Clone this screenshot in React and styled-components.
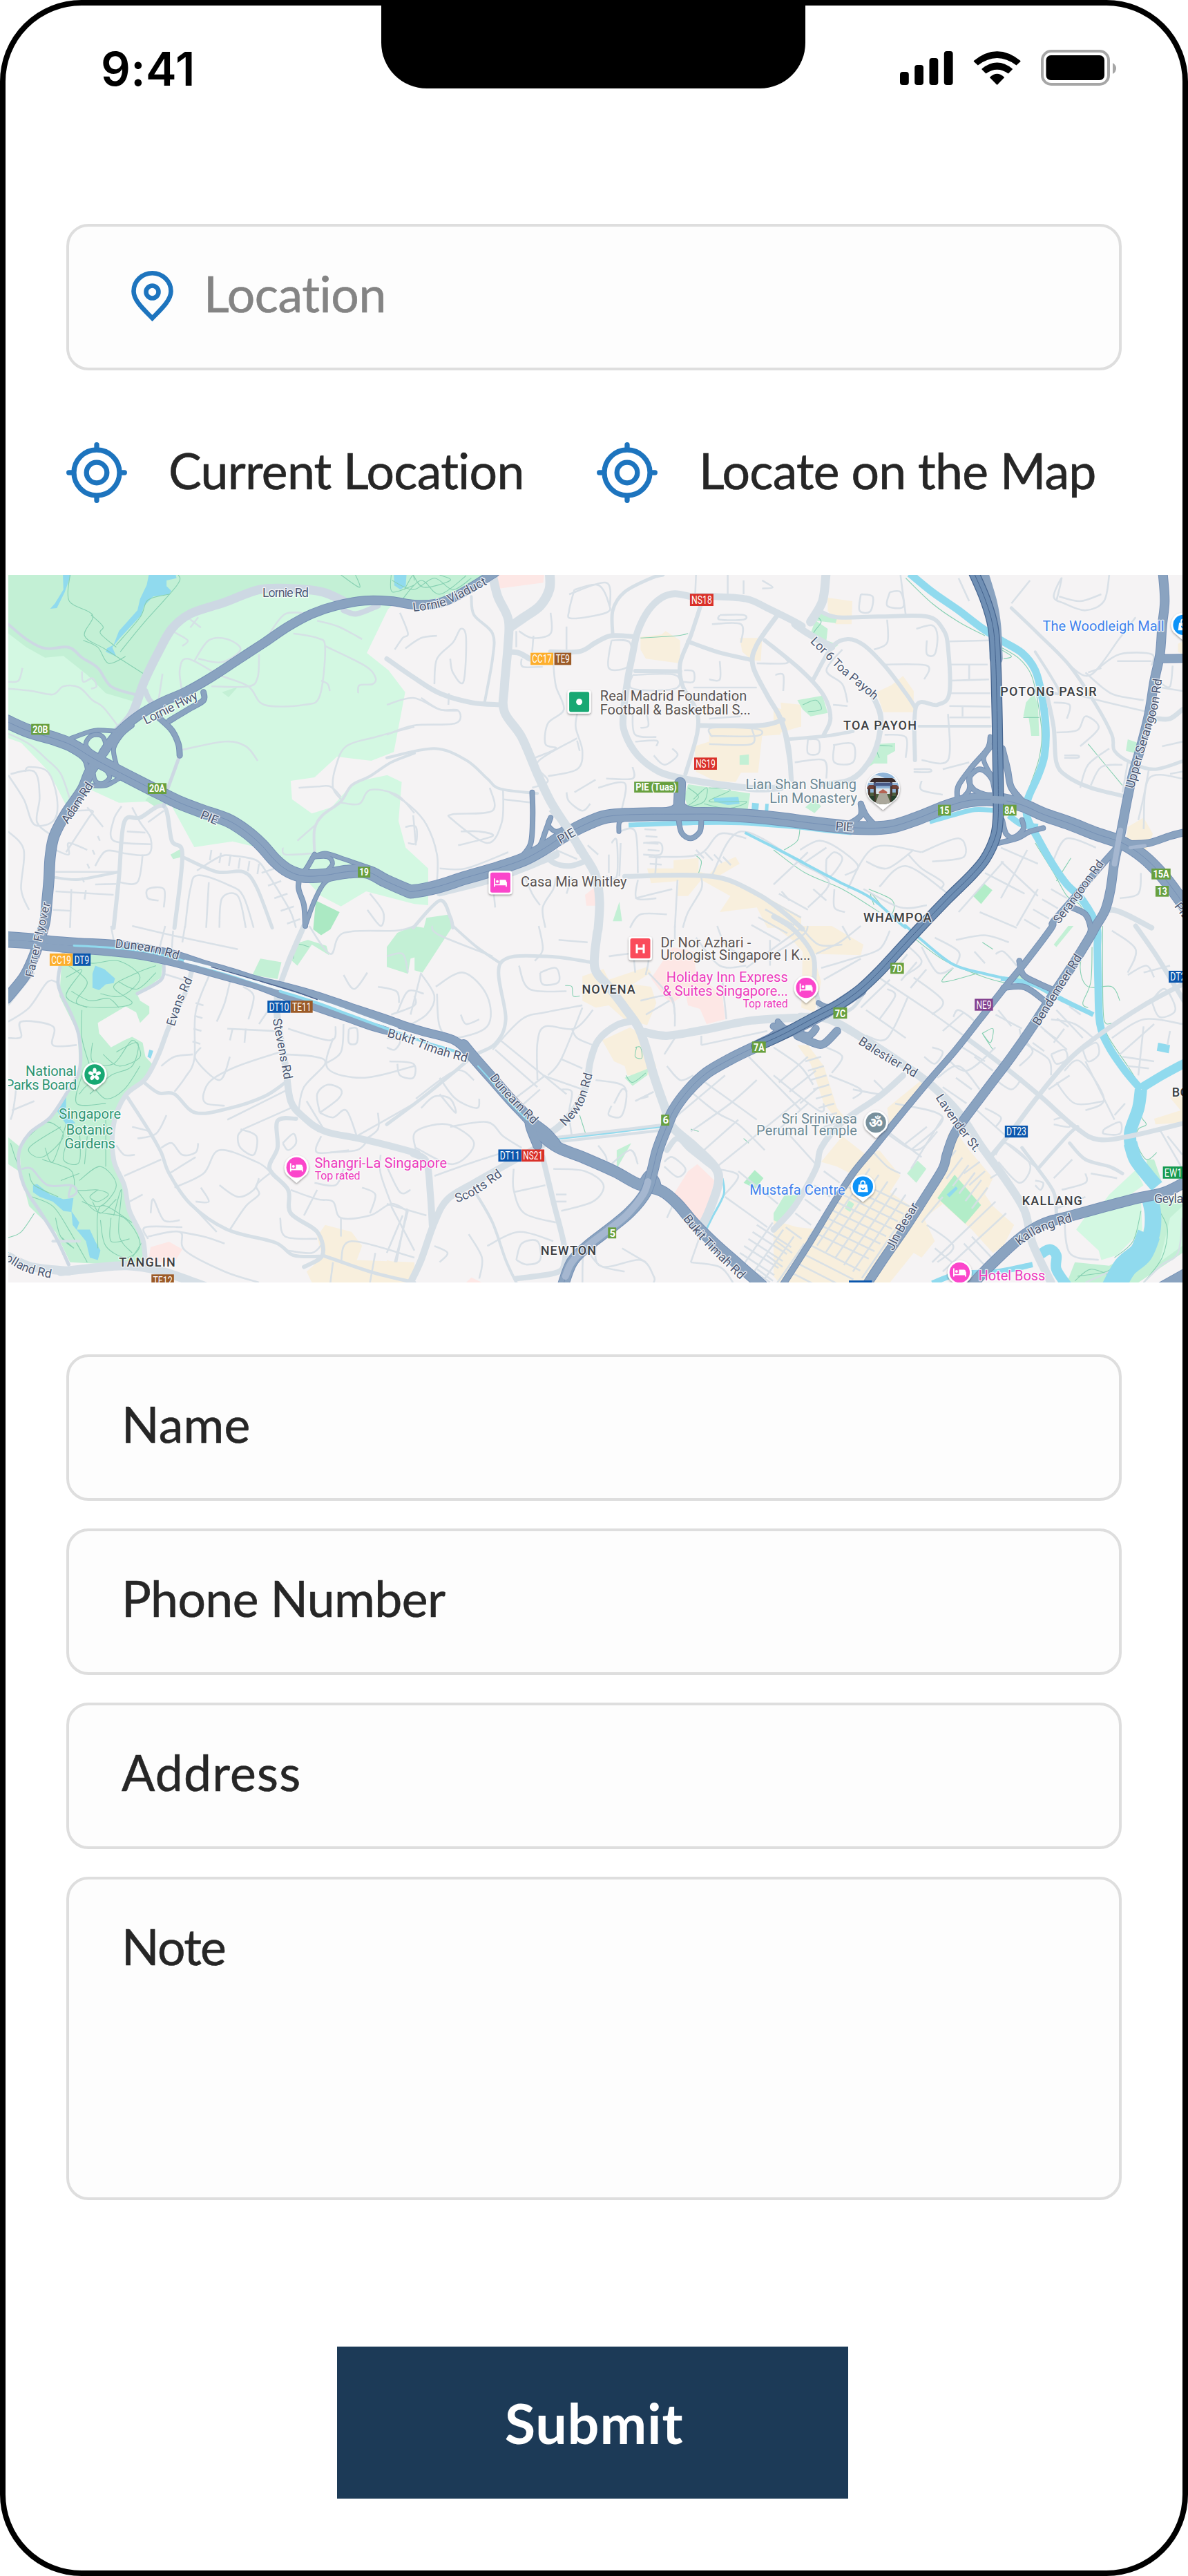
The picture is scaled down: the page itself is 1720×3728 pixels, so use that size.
import React from "react";
import styled, { createGlobalStyle } from "styled-components";

const GlobalStyle = createGlobalStyle`
  * { box-sizing: border-box; }
  body { margin: 0; background: #fff; }
`;

const Phone = styled.main`
  position: relative;
  display: flex;
  flex-direction: column;
  width: 1720px;
  height: 3728px;
  border: 8px solid #000;
  border-radius: 118px;
  background: #fff;
  overflow: hidden;
  font-family: Lato, "Open Sans", sans-serif;
`;

const Notch = styled.div`
  position: absolute;
  top: -1px;
  left: 544px;
  width: 614px;
  height: 121px;
  border-radius: 0 0 66px 66px;
  background: #000;
`;

const StatusBar = styled.header`
  display: flex;
  justify-content: space-between;
  height: 316px;
  padding: 52px 96px 0 138px;
`;

const Clock = styled.time`
  font: 600 67px/80px Inter, sans-serif;
  letter-spacing: 0.4px;
  color: #000;
`;

const StatusIcons = styled.svg`
  display: block;
  width: 314px;
  height: 56px;
  margin-top: 10px;
`;

const Field = styled.div`
  display: flex;
  align-items: flex-start;
  height: ${(p) => (p.$tall ? 468 : 212)}px;
  padding: ${(p) => (p.$icon ? "64px 0 0 90px" : "54px 0 0 76px")};
  border: 4px solid #dedede;
  border-radius: 32px;
  background: #fdfdfd;
`;

const Label = styled.span`
  margin-top: ${(p) => p.$lift || 0}px;
  font-size: 71.5px;
  line-height: 84px;
  letter-spacing: ${(p) => p.$track || 0}px;
  white-space: nowrap;
  color: ${(p) => (p.$muted ? "#848484" : "#262626")};
  -webkit-text-stroke: 0.6px currentColor;
`;

const PinIcon = styled.svg`
  width: 61px;
  height: 73px;
  margin-right: 44px;
`;

const Search = styled.section`
  padding: 0 88px;
`;

const Choices = styled.section`
  display: flex;
  height: 88px;
  margin: 104px 88px 0;
`;

const Choice = styled.div`
  display: flex;
  align-items: center;
  gap: 60px;
  width: ${(p) => p.$width}px;
`;

const TargetIcon = styled.svg`
  flex: none;
  width: 88px;
  height: 88px;
`;

const MapFrame = styled.section`
  flex: none;
  height: 1024px;
  margin: 104px 0 0 4px;
  width: 1700px;

  svg {
    display: block;
    font-family: Roboto, sans-serif;
  }
`;

const Form = styled.form`
  display: flex;
  flex-direction: column;
  gap: 40px;
  margin: 104px 88px 0;
`;

const Submit = styled.button`
  align-self: flex-start;
  width: 740px;
  height: 220px;
  margin: 212px 0 0 480px;
  padding: 0 0 0 4px;
  border: 0;
  background: #1c3a57;
  color: #fff;
  font: 700 81px/96px Lato, sans-serif;
  letter-spacing: 0.8px;
`;

/* Map geometry. Points are grouped in six sheets; a letter selects the sheet. */
const KX = 600 / 1568;
const SHEETS = {
  A: [0, 820, KX, 1 / 3],
  B: [560, 820, KX, 1 / 3],
  C: [1120, 820, KX, 1 / 3],
  D: [0, 1340, KX, 530 / 1568],
  E: [560, 1340, KX, 530 / 1568],
  F: [1120, 1340, KX, 530 / 1568],
};

const points = (text) => {
  let sheet = SHEETS.A;
  let x = null;
  const out = [];
  text.trim().split(/\s+/).forEach((t) => {
    if (SHEETS[t]) sheet = SHEETS[t];
    else if (x === null) x = Number(t);
    else {
      out.push([sheet[0] + x * sheet[2], sheet[1] + Number(t) * sheet[3]]);
      x = null;
    }
  });
  return out;
};

const f = (n) => n.toFixed(1);

const curve = (text) => {
  const p = points(text);
  let d = `M${f(p[0][0])} ${f(p[0][1])}`;
  for (let i = 0; i < p.length - 1; i++) {
    const a = p[i - 1] || p[i];
    const b = p[i];
    const c = p[i + 1];
    const e = p[i + 2] || c;
    d += `C${f(b[0] + (c[0] - a[0]) / 6)} ${f(b[1] + (c[1] - a[1]) / 6)} ${f(c[0] - (e[0] - b[0]) / 6)} ${f(c[1] - (e[1] - b[1]) / 6)} ${f(c[0])} ${f(c[1])}`;
  }
  return d;
};

const poly = (text) => "M" + points(text).map((p) => `${f(p[0])} ${f(p[1])}`).join("L") + "Z";
const line = (text) => "M" + points(text).map((p) => `${f(p[0])} ${f(p[1])}`).join("L");

const C = {
  land: "#f5f3f4",
  park: "#c3f0d5",
  lawn: "#d3f8e2",
  water: "#90daee",
  tan: "#f8efdd",
  pink: "#fde7e5",
  street: "#d6dfe6",
  parkRoad: "#cdd8e3",
  path: "#86d0b2",
  hwy: "#8aa3c0",
  hwyEdge: "#7590b5",
  cte: "#6f8fb4",
  cteEdge: "#46658f",
};

const AREAS = [
  [C.lawn, "A 31 36 1480 36 1568 80 1468 185 1388 375 1470 450 1533 545 1490 805 1405 843 1275 825 1190 915 1100 930 1105 1010 1180 1072 1255 1045 1340 935 1465 905 1520 935 1508 1105 1535 1220 1620 1310 1620 1470 1568 1465 1385 1410 1290 1475 1215 1430 1150 1350 1060 1310 960 1215 880 1193 735 1218 650 1040 560 1020 450 1025 345 970 260 1060 185 890 80 765 31 745"],
  [C.park, "A 31 36 1568 36 1568 120 1300 150 1220 110 1090 90 980 100 720 200 640 290 560 480 520 590 400 550 330 470 240 388 170 395 100 350 31 290"],
  [C.park, "B 0 36 415 36 320 100 210 135 120 150 0 140"],
  [C.park, "A 840 545 900 522 865 567"],
  [C.park, "A 560 1000 600 990 630 1040 590 1045 550 1015"],
  [C.park, "A 645 1250 685 1225 690 1260 655 1270"],
  ["#abe9c3", "A 1195 1450 1285 1500 1250 1575 D 1215 40 1185 15"],
  [C.park, "D 1165 60 1235 85 1245 125 1180 80 1125 170 1095 140 1120 75"],
  [C.park, "D 985 140 1065 155 1050 228 955 210"],
  [C.park, "B 140 1568 150 1525 240 1510 250 1568 E 250 0 135 200 105 190 105 135 90 140 80 205 0 175 0 90 40 30 100 0"],
  [C.park, "D 235 125 380 120 520 140 615 165 610 220 520 295 530 320 565 345 565 375 530 415 515 370 475 345 370 415 375 460 420 520 470 490 500 475 540 500 550 560 575 590 545 660 470 725 430 860 430 1010 470 1110 490 1230 545 1350 550 1440 400 1448 265 1440 210 1310 110 1200 80 1070 75 970 110 885 190 815 250 720 300 610 295 460 225 300"],
  [C.park, "D 31 905 75 945 65 1000 85 1060 31 1020"],
  [C.water, "A 238 36 268 36 245 110 215 180 190 183 208 160 240 100"],
  [C.water, "A 563 36 665 36 668 50 630 60 630 85 648 105 640 120 580 130 545 170 535 210 450 315 425 350 440 390 400 370 405 355 430 340 450 280 520 190 530 140 555 80"],
  [C.water, "A 1490 36 1538 36 1535 85 1515 100 1492 82"],
  [C.water, "D 350 205 360 170 395 185 435 225 430 245 400 250 375 275 350 265"],
  [C.water, "D 215 790 250 730 250 800 285 845 250 850"],
  [C.water, "D 125 1110 140 1105 190 1150 240 1170 278 1165 270 1225 240 1220 200 1180 150 1160 125 1140"],
  [C.water, "D 270 1220 300 1270 290 1300 340 1300 360 1350 380 1390 370 1430 340 1420 325 1350 275 1280"],
  [C.pink, "B 413 36 595 36 592 70 425 95 415 60"],
  [C.pink, "B 750 1425 790 1390 792 1472 755 1472"],
  [C.pink, "D 570 1375 640 1352 690 1385 660 1440 560 1440"],
  [C.pink, "E 1000 225 1080 90 1160 110 1170 200 1270 300 1280 400 1210 420 1185 355 1140 340 1130 290 1080 330 1055 310"],
  [C.pink, "E 1140 1050 1175 1020 1240 1090 1200 1260 1160 1265 1085 1150"],
  [C.pink, "E 300 1527 320 1505 360 1527"],
  [C.tan, "B 960 305 1040 295 1055 280 1110 320 1110 420 980 400 960 360"],
  [C.tan, "B 1335 310 1420 310 1415 410 1380 405 1345 370"],
  [C.tan, "B 1220 705 1490 680 1490 730 1420 735 1405 895 1340 895 1320 935 1240 930 1170 890 1165 780 1220 760"],
  [C.tan, "B 1490 590 1568 600 1568 695 1500 700"],
  [C.tan, "C 205 135 298 150 295 250 235 250 205 190"],
  [C.tan, "C 390 545 445 515 490 475 530 540 530 632 415 632"],
  [C.tan, "C 0 610 100 640 100 695 0 730"],
  [C.tan, "B 1085 1275 1180 1265 1180 1325 1220 1335 1260 1290 1320 1260 1335 1290 1260 1340 1400 1410 1568 1520 1568 1568 1440 1568 1400 1480 1260 1500 1300 1430 1190 1360 1140 1430 1100 1430 1105 1365 1000 1375 985 1310 1085 1310"],
  [C.tan, "C 1340 1130 1400 1090 1435 1160 1410 1235 1335 1190"],
  [C.tan, "C 1530 335 1547 325 1547 380 1530 370"],
  [C.tan, "E 740 215 820 185 840 230 985 175 1000 200 930 250 1000 260 1020 330 985 425 940 410 900 400 840 340 790 350 740 320"],
  [C.tan, "E 815 490 920 435 960 460 1020 600 1010 640 910 640 900 600 860 580"],
  [C.tan, "D 1230 1280 1330 1310 1370 1370 1350 1430 1568 1440 1568 1527 1180 1527 1160 1480 1220 1420 1200 1330"],
  [C.tan, "E 0 1430 100 1465 85 1527 30 1527"],
  [C.tan, "F 0 0 220 0 340 80 330 125 150 120 180 240 155 370 105 350 110 110 70 60"],
  [C.tan, "F 90 510 130 510 190 600 240 780 290 850 240 830 190 760 140 590"],
  [C.tan, "F 180 1010 260 900 350 980 400 960 480 1070 440 1140 560 1230 610 1350 560 1420 530 1400 440 1527 20 1527 0 1500 0 1260 90 1290 180 1300 290 1060 240 1030"],
  [C.tan, "F 430 780 560 660 580 690 440 860"],
  [C.tan, "F 660 890 690 880 740 960 830 1080 800 1150 830 1200 910 1280 870 1370 830 1400 750 1300 640 1190 560 1260 560 1200 650 1050"],
  [C.tan, "F 1500 735 1568 700 1568 840 1445 850 1440 825 1540 790"],
  [C.park, "B 1140 945 1375 985 1365 1060 1140 1045 1125 1000"],
  [C.park, "B 855 1540 880 1455 890 1540"],
  [C.park, "B 1335 820 1370 815 1370 860 1335 860"],
  [C.park, "C 170 195 240 225 235 245 160 235 205 270 200 320 245 340 215 365 140 290"],
  [C.park, "C 90 580 185 560 205 635 140 650 110 620"],
  [C.park, "C 390 770 460 765 460 800 430 820 430 855 380 855 345 880 380 820"],
  [C.park, "C 120 1045 155 1010 180 1040 155 1070"],
  [C.park, "C 955 590 985 550 1000 600 1005 735 975 735 965 655 945 650"],
  [C.park, "C 1340 750 1378 765 1370 810 1333 800"],
  ["#b2edc8", "C 755 1430 795 1375 828 1405 785 1465"],
  ["#b2edc8", "F 685 1065 785 1195 725 1275 620 1165"],
  [C.park, "F 505 1060 545 1005 578 1040 540 1100"],
  [C.park, "F 0 1230 40 1155 100 1150 20 1270 0 1260"],
  [C.park, "F 270 1210 285 1175 305 1190 290 1225"],
  ["#b2edc8", "E 1350 1100 1392 1045 1425 1080 1395 1125"],
  [C.park, "E 900 650 990 610 985 640 930 685"],
  [C.park, "E 870 960 925 930 870 1040"],
  [C.park, "F 1060 80 1115 0 1135 0 1070 90"],
  [C.park, "F 920 205 950 200 970 235 1050 275 1060 310 960 240 900 225"],
  [C.lawn, "F 1270 1150 1370 1045 1400 1110 1350 1150 1250 1180"],
  [C.lawn, "F 1180 1245 1390 1170 1395 1300 1300 1410 1240 1430 1230 1390 1145 1300"],
  [C.park, "F 1410 1000 1440 1000 1470 1100 1420 1060"],
  [C.park, "F 1440 1180 1547 1150 1547 1400 1380 1527 1110 1527 1140 1440 1270 1455 1390 1380 1400 1300"],
  [C.lawn, "F 1500 1250 1547 1200 1547 1370 1460 1440"],
  [C.water, "F 1455 500 1500 510 1495 545 1450 535"],
  [C.water, "F 655 1150 690 1115 697 1125 665 1162"],
  [C.water, "B 1235 1005 1330 1000 1335 1030 1290 1035 1240 1020"],
  [C.water, "B 1382 1025 1408 1028 1405 1065 1380 1060"],
  [C.water, "B 1432 1030 1445 1030 1443 1068 1430 1065"],
  [C.water, "D 565 530 580 535 570 568 558 560"],
];

const WATERWAYS = [
  [11, "C 515 30 600 110 700 190 780 260 860 320 940 375 990 450 1015 560 1030 700 1025 820 1000 910 962 1010 960 1090 1000 1180 1060 1300 1110 1380 1170 1450 1222 1560 F 1225 100 1228 250 1235 420 1270 520 1330 620 1390 700"],
  [18, "F 1390 700 1380 780 1350 880 1352 950"],
  [20, "F 1350 930 1370 1000 1410 1060 1450 1115"],
  [24, "F 1420 1150 1435 1230 1430 1320 1400 1380"],
  [34, "F 1420 1320 1390 1400 1330 1460 1280 1560"],
  [13, "F 1390 695 1470 640 1568 580"],
  [7, "B 915 1122 1150 1112 1340 1112 1568 1132 C 105 1132 200 1145 295 1155"],
  [7, "C 590 1108 680 1078 760 1055 830 1058"],
  [9, "C 890 1080 940 1120 1000 1130"],
  [4, "B 1355 1155 1450 1210 1568 1280 C 105 1282 250 1370 370 1440 490 1560 F 500 0 560 60 680 165 800 205 900 230"],
  [7, "F 860 225 980 250 1100 320 1210 380"],
  [3, "E 640 912 800 892 1040 860 1080 870"],
  [3, "E 1270 1080 1275 1150 1230 1250 1200 1320"],
  [15, "F 1010 1405 1045 1385 1070 1410 1070 1470 1110 1540"],
  [8, "F 600 1530 700 1490 850 1480 980 1450"],
];

const ARTERIALS = [
  [13, "B 400 36 420 130 460 230 458 350 445 520 445 630 510 740 570 900 620 1020 680 1130 740 1240 790 1340 805 1450 800 1568 E 795 40 787 180 840 260 900 350 950 430 980 520 1010 640 1050 770 1080 860 1160 940 1240 1030 1255 1100 1220 1220 1190 1290"],
  [14, "B 617 36 615 100 580 170 520 220 470 260"],
  [10, "B 1150 130 1090 118 1040 135 990 190 950 280 930 380 910 500 895 640 900 720 950 820 1030 890 1120 920 1250 945 1400 965 1490 960"],
  [10, "B 1150 130 1240 130 1360 140 1440 180 1568 255 C 80 250 130 290 220 350"],
  [8, "B 460 370 500 375 540 400"],
  [7, "B 620 370 730 368 790 330 850 300 940 305"],
  [6, "B 1190 160 1150 300 1110 420 1120 520 1170 620 1175 720 1130 900"],
  [6, "B 1140 325 1250 370 1380 405"],
  [7, "B 1475 215 1400 340 1385 430 1440 560 1490 660 1520 780 1530 920"],
  [6, "B 1430 320 1568 450 C 190 560 215 660 190 730"],
  [7, "B 1180 690 1410 690 1500 665"],
  [6, "B 940 453 1110 455"],
  [5, "B 1045 36 1000 50 900 110 855 190 855 300"],
  [7, "B 900 1345 1230 1345 1400 1420 1500 1500 1568 1568 F 105 10"],
  [8, "B 750 1280 690 1300 630 1285 600 1250"],
  [11, "B 200 1415 420 1350 590 1275 640 1250"],
  [4, "A 1568 810 1480 850 1400 910 1330 950 1290 1020 1220 1080 1190 1140 1190 1240"],
  [13, "C 198 36 185 150 140 240"],
  [6, "C 170 190 240 220 400 217 580 217 640 270 660 350 665 550 620 600 540 605 535 840"],
  [5, "C 50 750 200 735 300 715"],
  [6, "C 150 490 220 350 280 315 340 340 420 430 500 550 535 610"],
  [8, "C 370 550 405 650 390 780 340 880 280 930 180 945"],
  [5, "C 0 600 40 720 70 930"],
  [4, "C 550 693 820 693"],
  [5, "C 900 180 1000 290 1120 430 1220 600 1280 730 1290 800 1350 850 1440 880 1547 845"],
  [6, "C 1035 560 1060 700 1070 850 1110 910 1200 960 1320 995"],
  [4, "C 1040 540 1080 540 990 370"],
  [7, "C 1450 660 1500 660 1547 620"],
  [8, "C 1210 1560 1280 1490 1430 1568"],
  [12, "E 975 455 1060 470 1200 445 1380 405 1568 392 F 105 390 210 400 330 475 480 585 600 685 700 800 790 950 880 1090 950 1220 980 1360 1050 1527"],
  [10, "E 940 405 870 425 800 490 770 580 755 680 720 770 660 850 600 900"],
  [10, "E 600 930 480 1005 330 1100 230 1170 180 1270 130 1430 90 1527"],
  [8, "E 590 990 630 1180 670 1360 672 1440 640 1485 490 1510"],
  [4, "E 640 905 800 885 1040 852"],
  [4, "E 640 925 800 905 1040 875"],
  [8, "E 1060 960 1100 910 1150 960 1240 1040"],
  [13, "D 230 1480 350 1465 480 1455 600 1475 720 1520 780 1545"],
  [13, "D 31 1415 120 1460 260 1478"],
  [10, "D 1050 290 1050 400 1080 600 1100 750 1150 820 1230 880 1380 915 1568 970 E 100 975 150 1010 165 1150 172 1280"],
  [8, "D 1150 0 1100 130 1060 250"],
  [7, "D 725 195 700 290 640 430 600 550 550 655 475 725 430 850 430 1000 470 1110 490 1220 540 1340 550 1450"],
  [5, "D 545 670 600 715 660 720 740 800 870 780 1000 730 1080 670"],
  [5, "D 480 730 560 870 610 970 640 1060 720 1190 860 1300 1040 1355 1110 1410 1210 1415"],
  [6, "D 1120 825 1050 835 1050 950 1020 1040 1090 1130 1100 1230 1200 1310 1220 1410 1150 1460"],
  [5, "D 1220 1410 1400 1480 1568 1527"],
  [7, "F 820 990 900 880 1000 730 1120 570 1240 460 1400 340 1547 250"],
  [7, "F 730 480 870 600 1010 730 1140 860 1230 915 1370 895 1568 840"],
  [9, "F 490 640 400 730 260 840 180 950 160 1040 80 1200 0 1300"],
  [7, "F 1370 0 1450 130 1520 260 1568 350"],
  [7, "F 0 -40 80 20 150 130 155 250 180 370"],
  [5, "F 200 400 300 350 360 250"],
  [4, "D 200 1350 300 1350"],
  [4, "A 210 1350 300 1358 450 1325"],
  [6, "A 430 1568 450 1350 470 1110 530 1090 620 1040 650 1190 690 1250 660 1568"],
  [5, "A 690 1260 820 1325 920 1325 970 1390 1030 1568"],
  [5, "E 0 850 130 740 250 630 330 555 410 505 450 400 430 160 600 130 770 155"],
  [4, "E 250 0 340 90 430 160"],
  [4, "E 340 1150 400 1270 450 1430 490 1527"],
  [7, "B 0 400 100 480 200 550 320 590 430 600"],
  [4, "B 320 130 330 210 400 290 400 400 370 590"],
  [4, "B 0 830 180 790 300 840 380 920 430 965 570 985"],
  [5, "B 100 1568 200 1450 240 1520 250 1568"],
  [5, "F 1000 1040 1110 900 1150 860"],
  [5, "F 1120 930 1180 1000 1270 1030 1320 1060"],
  [5, "F 940 950 1000 1040 1060 1140 1070 1230"],
];

const HIGHWAYS = [
  [13, "A 390 810 440 730 520 650 610 590 700 545 800 480 900 405 1000 330 1090 260 1180 205 1270 170 1380 148 1480 150 1568 165 B 190 160 250 135 320 90 410 25"],
  [8, "A 770 545 770 580 720 615 640 670"],
  [8, "A 600 655 650 710 675 770 680 820"],
  [15, "A 380 830 340 890 310 970 250 1070 205 1170 190 1260 185 1360 178 1450 170 1540 D 150 60 125 140 90 220 25 310"],
  [6, "A 270 745 330 720 370 710 440 715"],
  [6, "A 440 860 430 790 460 730 500 690"],
  [6, "A 360 820 325 775 345 735 385 735 400 780 380 830"],
  [6, "A 350 870 360 930 390 940 415 915 400 880"],
  [6, "A 350 950 400 950 450 920 480 900"],
  [6, "A 260 790 320 840 335 920"],
  [7, "A 1190 1250 1160 1310 1135 1350 1130 1400 1150 1470 1155 1560"],
  [6, "A 1190 1260 1230 1245 1290 1265 1390 1305"],
  [6, "A 1190 1260 1240 1260 1258 1290 1230 1330"],
  [6, "A 1155 1560 1190 1450 1230 1370 1290 1340"],
  [7, "B 550 980 552 1080 545 1200 510 1260"],
  [7, "B 620 1090 600 1150 580 1210 540 1250"],
  [6, "B 620 1090 610 1120 640 1150 680 1130"],
  [16, "B 1110 940 1105 1060"],
  [7, "B 1105 1020 1080 1050 1010 1065"],
  [7, "B 1105 1020 1140 1050 1220 1065"],
  [7, "B 1103 1090 1115 1155 1150 1180 1185 1150 1190 1095"],
  [6, "B 878 1150 880 1110 900 1095"],
  [8, "C 330 1030 330 1080 290 1115"],
  [8, "C 330 1030 350 1080 380 1120"],
  [7, "C 820 740 810 790 750 870 700 950 695 1000"],
  [7, "C 740 900 740 970 700 1020"],
  [7, "C 840 1000 825 920 780 880 740 920 760 970 830 1000"],
  [6, "C 825 780 795 830 810 880 840 930"],
  [9, "C 865 790 885 880 900 960 950 1030"],
  [7, "C 850 1200 920 1180 970 1150 1020 1135"],
  [7, "C 865 1100 880 1160 910 1175 945 1140 940 1100"],
  [19, "A 25 672 110 715 200 745 270 775 350 830 430 880 540 945 600 980 680 1025 760 1060 860 1100 930 1150 990 1210 1040 1275 1090 1320 1150 1343 1230 1340 1310 1325 1390 1325 1460 1365 1540 1405 B 100 1410 190 1390 300 1350 420 1310 520 1270 600 1220 660 1175 740 1125 820 1088 900 1078 1000 1075 1100 1075 1250 1075 1400 1085 1520 1100 C 105 1108 230 1125 330 1135 440 1130 540 1095 650 1045 740 1015 850 1012 940 1035 1020 1075 1120 1115 1220 1160 1320 1200 1400 1260 1470 1340 1530 1430 1590 1530"],
  [13, "C 1473 30 1480 150 1470 260 1462 380 1440 500 1420 640 1390 780 1360 900 1340 1000 1315 1150 1290 1280 1275 1400 1255 1490 1220 1560 F 1190 60 1130 170 1060 290 980 430 900 560 820 680 720 830 680 900 655 980 640 1040 580 1150 500 1290 420 1420 350 1540"],
  [9, "C 1300 1220 1230 1310 1150 1420 1060 1540 F 1050 10 950 160 870 270 780 400 690 530 590 660 480 810 380 950 300 1060 220 1200 140 1350 30 1545"],
  [8, "C 1130 1480 1180 1510 1200 1568 F 1195 40"],
  [10, "C 1335 1205 1420 1200 1500 1170 1568 1150"],
  [12, "C 1460 400 1568 398"],
  [8, "F 930 150 945 210 1000 245 1070 280"],
  [8, "F 870 265 950 262 1025 320"],
  [15, "F 1568 1090 1480 1140 1380 1165 1260 1200 1130 1240 1020 1275 940 1330 860 1410 780 1500 750 1540"],
  [16, "F 1450 1560 1568 1485"],
  [12, "D 25 42 120 50 200 62 300 70 430 78 540 95 650 120 760 160 880 200 980 235 1080 262 1200 300 1330 350 1450 395 E 60 425 140 453 250 487 310 540"],
  [11, "D 25 75 120 82 250 98 400 110 520 125 640 152 760 187 870 222 960 250 1050 288 1180 342 1300 388 1400 428 1470 450"],
  [16, "E 290 510 330 565 400 655 470 745 540 830 590 900 650 950 740 990 860 1050 950 1105 1040 1135 1100 1190 1160 1270 1240 1360 1330 1450 1420 1540"],
  [13, "E 570 940 540 840 600 880 640 930"],
  [9, "E 960 1110 990 1060 1020 1090 1030 1140"],
  [8, "E 1480 410 1475 450 1430 490"],
  [8, "E 1480 410 1510 440 1568 450"],
  [11, "F 90 470 150 500 190 505 240 450"],
  [7, "F 170 330 200 345 240 340"],
  [10, "F 0 430 60 450 130 470 160 440"],
];
const PIE = HIGHWAYS.find((h) => h[0] === 19)[1];

const CTE_SOUTH = "F 330 275 250 335 150 400 60 450 0 480 E 1390 520 1300 570 1210 630 1140 705 1085 790 1055 870 1025 960 1005 1050 980 1140 920 1225 840 1300 760 1370 700 1440 665 1545";
const CTE_NORTH = "C 757 25 800 140 830 260 840 400 845 600 848 800 850 950 850 1080 840 1170 800 1270 740 1350 660 1440 560 1560 F 490 85 400 195 330 270 250 335 150 395 60 450 0 483 E 1400 515";

const STREETS = [
  "A 31 500 70 495 85 440", "A 31 530 120 540 200 555 240 520 300 525 350 580 390 610 445 690",
  "A 310 455 315 500 350 485 365 520 345 530", "A 690 550 680 450 710 400 830 470 940 520 1000 600 1150 600 1210 560 1230 350 1200 310 1110 290",
  "A 735 410 790 320 860 315 910 360 840 415 750 400", "A 800 520 940 520 975 480 980 380", "A 1020 290 1080 205 1170 205",
  "A 1200 235 1280 260 1370 315", "A 1230 345 1380 430 1420 480 1410 510 1360 515 1355 550", "A 1215 495 1240 510 1248 540", "A 690 795 850 760 930 780 975 843",
  "A 1125 1190 1190 1125", "A 1070 1220 1080 1250 1180 1245", "A 1290 1025 1360 1030 1400 970 1500 990 1568 1070",
  "A 1568 695 1420 740 1310 780 1270 870 1260 960 1290 1010", "A 1130 960 1200 955 1250 955 1290 1000", "A 715 225 760 265", "A 720 265 750 220",
  "A 660 285 710 320 690 345", "A 600 580 615 465", "A 31 725 110 770 180 840 230 900 265 1010",
  "A 40 900 130 890 150 1000 140 1110 200 1170", "A 95 890 110 870 180 890 215 1000 205 1100 130 1120 90 1010 31 905",
  "A 31 1150 90 1230 80 1400 110 1490", "A 210 1230 260 1250 260 1200 330 1230", "A 250 1240 330 1100 350 1060 290 1060",
  "A 330 1045 390 1130", "A 460 1040 430 1100 430 1190 570 1205", "A 480 1150 550 1155", "A 500 1045 530 1110 570 1180 560 1250 470 1245",
  "A 360 1300 400 1235 470 1245", "A 210 1410 430 1425", "A 360 1380 440 1378", "A 270 1400 265 1568", "A 325 1405 320 1445", "A 200 1490 270 1495",
  "A 210 1325 450 1325", "A 450 1370 520 1370 540 1250", "A 560 1110 620 1060", "A 745 1320 830 1260 880 1255 970 1275 1010 1330 1060 1420 1100 1500 1120 1568",
  "A 700 1568 720 1400 750 1340 870 1385 920 1430 960 1568", "A 790 1370 780 1568", "A 830 1568 840 1440 900 1430 930 1568",
  "A 620 1480 620 1400 560 1400 560 1440 600 1450", "A 1400 1420 1450 1500 1440 1560 1390 1490",
  "B 0 600 100 570 200 620 270 625", "B 30 360 60 310 80 290 50 200", "B 180 510 190 400 250 330 280 270 300 310 290 500 250 460 240 400",
  "B 70 355 130 310 190 300", "B 130 570 200 620 270 625 260 680 100 690 0 730", "B 235 550 233 600", "B 500 280 550 310 620 290 620 200",
  "B 490 350 490 280", "B 550 370 555 300", "B 510 400 515 435 590 435", "B 630 420 640 520 670 620 610 680 600 770 640 790 560 830",
  "B 710 100 800 80 840 160 830 200 700 225 690 190 710 100", "B 690 120 830 70 845 170", "B 680 260 680 360", "B 850 320 920 330 915 430 840 440 850 320",
  "B 720 640 715 700 740 800 720 880 610 910", "B 550 960 610 930 570 850 720 745", "B 720 755 730 800", "B 440 965 435 1110 380 1200 250 1100 250 1075 400 1060 390 960",
  "B 440 1010 550 1025", "B 200 1310 300 1310 460 1240", "B 280 1150 350 1150 400 1170 270 1210", "B 10 980 90 1040 150 1120 190 1250 190 1370",
  "B 70 1130 110 1130 110 1200 80 1200", "B 100 1080 110 1210", "B 680 980 690 1020 740 1060 770 1030", "B 710 980 790 925", "B 830 920 930 920 930 870",
  "B 800 960 900 940 890 1050", "B 1170 36 1165 170", "B 1290 36 1290 120", "B 1420 60 1460 90 1420 95", "B 1350 60 1350 120",
  "B 1260 210 1350 210 1350 230 1260 230 1260 210", "B 1230 250 1340 250 1340 330", "B 1400 420 1510 420 1510 400", "B 1260 410 1260 490 1220 490",
  "B 1160 525 1400 525", "B 1190 560 1320 560 1320 590", "B 1220 660 1340 650", "B 1230 740 1230 700 1400 705 1400 735 1230 735", "B 1220 770 1380 770 1380 700",
  "B 930 470 1090 470 1090 530 930 530 930 470", "B 1125 450 1160 455 1160 500 1120 500", "B 930 640 940 730 1020 740", "B 940 760 1020 755 1020 780",
  "B 980 620 990 690 960 700", "B 1010 820 1050 860 1100 820 1080 790", "B 1470 470 1500 470 1500 540", "B 880 1150 940 1150 950 1330", "B 885 1200 880 1345",
  "B 840 1250 840 1330", "B 970 1200 1035 1200 1035 1250 970 1250", "B 1010 1260 1180 1250 1260 1160 1360 1180", "B 1020 1265 1015 1350",
  "B 1230 1340 1340 1150 1568 1290", "B 1100 1360 1090 1568", "B 940 1440 1080 1400", "B 950 1360 945 1440 1020 1440", "B 1190 1350 1190 1400 1140 1500 1120 1568",
  "B 920 1568 960 1510 1060 1510", "B 600 1568 590 1480 630 1400 640 1350", "B 520 1340 550 1420 580 1470", "B 680 1420 700 1350", "B 410 1480 405 1420",
  "B 850 1200 870 1190 870 1345 830 1345", "B 640 1230 720 1270", "B 760 1210 800 1250",
  "C 330 120 375 130 365 195 325 190 330 120", "C 440 110 480 110 490 175 430 170 440 110", "C 480 36 500 210", "C 540 270 600 255 620 300 610 380 580 380 580 320",
  "C 665 325 820 320", "C 670 425 810 425", "C 670 495 815 490", "C 670 550 820 550", "C 665 605 820 608", "C 665 655 820 655", "C 715 605 715 650", "C 740 425 740 490",
  "C 430 230 430 330 380 360", "C 420 425 580 430 570 490", "C 260 360 200 450 260 510 280 590", "C 225 600 280 605", "C 225 775 300 770 300 850 230 850 230 775",
  "C 130 750 170 755 170 810 130 810 130 750", "C 80 850 190 840 200 920", "C 660 640 660 840 560 840", "C 420 730 500 740 500 830", "C 530 880 590 880 590 892 530 892",
  "C 640 880 740 850", "C 560 930 560 970 640 990", "C 700 50 740 150", "C 900 160 970 60", "C 1070 150 1090 50 1060 130 1100 160 1180 190 1250 150 1270 36", "C 1080 130 1160 150 1240 120",
  "C 1120 430 1200 470 1310 310 1370 220", "C 1180 460 1250 530 1300 560 1400 580", "C 1190 460 1240 440", "C 1230 440 1310 380 1430 380 1430 430", "C 1300 410 1430 410",
  "C 1060 590 1120 600 1110 660", "C 1070 720 1150 710 1180 650 1230 700 1160 780", "C 1160 560 1300 600 1450 640", "C 1160 960 1190 860 1270 790", "C 1200 950 1240 870 1320 860",
  "C 1340 850 1320 980", "C 1420 880 1400 1000 1380 1100", "C 1500 900 1547 890", "C 1547 920 1420 920 1400 1140", "C 1060 1270 1110 1180 1220 1220", "C 1100 830 1150 830 1150 820 1100 820",
  "C 1440 520 1547 540", "C 1470 780 1547 760", "C 1510 430 1500 520 1470 510",
  "C 100 1230 170 1190 240 1220 320 1300 270 1340", "C 280 1400 380 1220 560 1240", "C 110 1290 200 1220", "C 200 1270 230 1240 260 1270 220 1340 200 1330 200 1270",
  "C 350 1280 430 1310 530 1230", "C 560 1240 700 1180 720 1260 600 1280", "C 400 1390 500 1300 660 1420", "C 340 1400 480 1480 580 1470", "C 510 1250 560 1310 640 1370 630 1400",
  "C 860 1280 1000 1430", "C 860 1220 1000 1290", "C 700 1500 870 1280", "C 960 1230 860 1440", "C 1000 1400 920 1560", "C 780 1500 920 1568", "C 800 1330 950 1420", "C 1310 1440 1380 1420 1390 1330",
  "C 230 1400 230 1480 270 1500", "C 150 1400 200 1450", "C 30 1410 60 1450", "C 0 1380 130 1240", "C 130 1480 210 1370 100 1290",
  "D 31 410 110 350 180 240 220 245", "D 31 340 130 200", "D 31 480 80 475 80 410 200 430 200 510 290 510", "D 31 690 60 680 50 790 40 830", "D 45 790 130 750",
  "D 620 205 720 240", "D 790 215 740 370 735 570 700 650 660 710", "D 600 110 625 0", "D 650 100 655 20", "D 430 60 420 0", "D 500 0 650 40 900 100", "D 700 0 690 70",
  "D 870 240 850 330 820 410", "D 920 260 960 300 940 400", "D 860 440 1040 450", "D 880 440 870 490", "D 930 440 925 500", "D 1040 320 980 420", "D 1090 440 1250 490 1270 430",
  "D 1060 540 900 600 800 660 770 720 780 760 850 770", "D 1080 550 1190 560 1230 590 1150 690 1130 790", "D 1230 590 1290 540 1300 420", "D 1260 480 1240 610 1380 650 1568 600",
  "D 610 600 660 560 730 550", "D 760 520 740 570 830 660 870 560", "D 860 830 1090 700", "D 920 870 1100 780", "D 910 870 970 900 960 980 910 950 900 900 920 870",
  "D 1070 930 1110 890 1120 930 1090 960 1070 930", "D 1210 800 1280 740 1290 700 1240 680 1200 720 1210 800", "D 1210 800 1260 820 1310 790 1350 900", "D 1160 750 1230 880",
  "D 1350 900 1568 760", "D 1380 915 1430 870 1430 800", "D 1250 970 1350 960 1390 920", "D 1215 900 1200 970 1320 960",
  "D 610 1000 470 1070", "D 610 950 650 930 690 980 740 970 750 930", "D 660 1120 770 1060 830 960 970 1010 1020 1050", "D 640 1060 740 990", "D 440 940 470 980 510 980",
  "D 500 860 570 880", "D 520 910 590 890 630 810", "D 720 1190 820 1310", "D 830 1110 900 1160 960 1130 980 1080", "D 760 1120 790 1180 740 1180", "D 870 1300 930 1200 980 1150 970 1110 1020 1060",
  "D 560 1330 680 1310 700 1390 850 1480 980 1527", "D 680 1310 770 1330 850 1360", "D 560 1340 550 1290 690 1290", "D 570 1230 580 1170 620 1260 680 1260", "D 490 1180 540 1150",
  "D 1100 1130 1200 1170 1260 1180 1290 1250 1400 1240 1480 1190 1540 1220", "D 1480 1190 1440 1060 1440 980", "D 1200 1130 1150 1240", "D 1190 1100 1270 1110 1300 1040",
  "D 1370 1120 1420 1150 1400 1230", "D 1290 1250 1290 1330", "D 1290 1440 1330 1350 1568 1420", "D 1500 1440 1540 1210", "D 1480 1200 1568 1390", "D 1250 1527 1260 1440", "D 1400 1527 1420 1400",
  "D 1060 1250 1080 1330 1200 1340", "D 1090 1390 1180 1400 1220 1360", "D 1170 0 1250 120 1300 30 1500 20 1568 0", "D 1430 260 1500 280 1510 330",
  "D 1300 210 1340 270 1390 200", "D 1370 370 1350 410", "D 1480 380 1568 340 1568 300", "D 1320 440 1320 500 1350 500 1350 440 1320 440",
  "E 0 130 60 120 80 200", "E 170 0 200 40 400 130", "E 130 205 180 300 150 380 60 440", "E 130 200 90 380", "E 185 260 290 200 380 300 380 430 250 480 200 430 190 290",
  "E 40 370 80 280 140 290", "E 280 380 300 420 350 400", "E 575 0 590 100 560 150", "E 650 60 760 70", "E 580 200 640 180 650 240 590 250 580 200", "E 500 170 540 270 680 280",
  "E 400 530 510 400 600 370 740 340", "E 570 660 570 500 600 430 710 440 780 360", "E 700 440 720 480 780 510", "E 740 350 660 570 610 640", "E 410 530 570 690", "E 430 490 680 720",
  "E 660 570 740 610", "E 590 640 740 700", "E 460 760 600 640", "E 500 780 580 700", "E 0 480 50 490 30 530 0 520", "E 10 580 100 590 100 650 50 640 40 590",
  "E 110 740 260 620 330 660", "E 130 780 180 730 240 740 260 800 200 720", "E 200 650 260 740 340 780 350 740", "E 110 960 110 880 230 850 330 930 250 1020 110 950",
  "E 240 860 380 840 440 900 510 950", "E 180 1070 330 1010 470 960", "E 790 660 900 690 890 810 840 810 850 770", "E 860 760 890 700 910 710", "E 660 700 700 710 690 800 700 900",
  "E 800 940 830 990 830 1040", "E 830 1040 920 960 950 1020", "E 630 1040 750 1050 820 1110 780 1180 660 1220", "E 480 1140 600 1110", "E 480 1040 480 1130 520 1230 640 1270",
  "E 640 1150 680 1150", "E 640 1180 680 1180", "E 0 1190 150 1240", "E 0 1030 50 1140 90 1130", "E 0 1400 60 1240", "E 30 1440 80 1220", "E 180 1370 230 1400 200 1440",
  "E 490 1430 510 1360 570 1350 580 1430 530 1450 490 1430", "E 310 1320 360 1420 350 1510", "E 380 1370 500 1310 630 1350", "E 740 1527 750 1390 820 1460 960 1430 1010 1500 1010 1527",
  "E 790 1370 800 1450 900 1480", "E 890 1380 980 1440", "E 1060 1250 1080 1200", "E 1150 1440 1260 1460 1310 1527", "E 1150 1440 1200 1280",
  "E 1140 700 1250 800 1330 850 1430 960", "E 1180 650 1400 830", "E 1370 560 1568 790", "E 1090 820 1280 640", "E 1150 880 1300 760 1400 660", "E 1250 1030 1568 740",
  "E 1200 960 1330 830", "E 1160 960 1220 1010", "E 1060 600 1110 660 1160 640", "E 1050 550 1090 480", "E 1190 510 1440 450", "E 1190 470 1190 510", "E 940 750 1010 710",
  "E 960 740 990 730", "E 1050 1010 1080 990 1130 1040 1100 1075 1050 1030", "E 1270 1160 1330 1070 1250 1040", "E 1280 1160 1440 1290", "E 1330 1050 1480 1190",
  "E 960 320 1070 300 1090 380", "E 980 380 1070 320", "E 1090 0 1090 60", "E 840 130 980 120 980 210", "E 930 80 940 200", "E 1170 50 1260 170 1360 170", "E 1250 0 1290 90 1400 150", "E 1270 240 1285 400",
  "E 990 200 1080 320 1090 430", "E 1360 180 1568 10", "E 1450 60 1450 170",
  "F 330 0 250 70 160 120", "F 440 20 400 100 300 140 180 180", "F 190 230 330 140", "F 290 300 380 200", "F 370 200 570 350 720 470", "F 440 230 330 350", "F 350 360 500 480",
  "F 510 300 430 480 350 470", "F 400 400 460 300 430 270", "F 600 380 640 320 530 220", "F 480 60 560 150 500 210", "F 560 90 620 200 680 180", "F 610 50 700 110 690 170",
  "F 690 60 800 40 890 70", "F 760 110 800 160", "F 840 120 870 110 920 170", "F 720 370 640 450", "F 680 390 700 360 760 410 740 440", "F 0 640 170 790 190 760", "F 0 520 100 600 150 680",
  "F 200 520 260 560 220 630", "F 60 710 160 620", "F 100 760 170 690", "F 20 670 130 560", "F 0 890 130 760", "F 40 870 160 1020", "F 210 640 330 700 300 740", "F 300 700 420 720 380 660",
  "F 430 890 540 960 620 880", "F 460 760 640 820 520 960", "F 420 870 560 990", "F 490 940 580 860", "F 520 1040 640 820", "F 370 960 430 1030 480 1060", "F 600 520 640 540 610 590 570 560",
  "F 650 560 730 620 840 520", "F 700 510 800 580", "F 620 650 700 600 780 700", "F 640 690 730 760", "F 690 650 750 700", "F 760 560 830 620", "F 830 650 900 700 940 650",
  "F 760 780 880 900", "F 800 780 860 820 840 860", "F 840 380 940 440", "F 850 360 900 430", "F 930 440 950 500 1040 570 1050 640", "F 950 490 980 540 930 600",
  "F 1050 400 1140 420 1220 490", "F 1070 360 1170 480", "F 1010 430 1110 530", "F 1060 500 1100 440", "F 1050 550 1100 530 1110 570 1070 590 1050 550",
  "F 1100 620 1160 580 1250 740 1180 790", "F 1170 530 1220 500 1230 550 1190 580 1170 530", "F 1070 670 1140 760 1250 750", "F 1040 700 1120 640", "F 1180 580 1290 830", "F 1290 810 1330 760",
  "F 1250 870 1310 840 1310 890 1250 890 1250 870", "F 1060 830 1100 820 1120 860 1060 850", "F 840 980 880 930 970 1020 930 1100 850 1010", "F 880 930 1000 1040", "F 1060 1080 1130 1000",
  "F 1090 1130 1180 1100 1180 1060", "F 1200 1060 1300 1080", "F 1070 1210 1180 1160", "F 1100 1230 1120 1400 1230 1430", "F 990 1090 1020 1100 1010 1130 990 1110",
  "F 1280 20 1370 100 1340 200", "F 1340 210 1410 170 1440 220", "F 1400 200 1500 170", "F 1430 320 1480 270 1520 360 1460 390 1430 320", "F 1280 480 1400 400 1547 420", "F 1300 560 1440 420",
  "F 1400 430 1380 640", "F 1320 560 1440 580", "F 1340 600 1420 610", "F 1500 450 1490 510", "F 1460 870 1547 1040", "F 1490 900 1547 980",
  "F 580 1280 680 1370 620 1440", "F 560 1270 640 1160", "F 600 1440 840 1180", "F 640 1480 880 1230", "F 750 1330 850 1450", "F 720 1360 830 1490", "F 610 1380 740 1500",
  "F 820 1080 850 1060", "F 780 1010 720 1060", "F 800 1050 740 1110", "F 1180 1527 1290 1470", "F 1400 1527 1470 1450 1530 1400 1547 1250",
  "F 0 120 110 40 130 0", "F 260 0 290 60", "F 100 0 170 80 260 80",
];

const hatch = (tile, x, y, sx, sy, rx, ry, n) =>
  Array.from({ length: n }, (_, i) => `${tile} ${x + sx * i} ${y + sy * i} ${x + sx * i + rx} ${y + sy * i + ry}`);

const BLOCKS = [
  ...hatch("F", 150, 1310, 22, -32, 210, 115, 8),
  ...hatch("F", 60, 1480, 26, -38, 190, 110, 4),
  ...hatch("F", 330, 1010, 34, 28, -200, 330, 8),
  ...hatch("F", 190, 1050, -36, 60, 60, 50, 8),
  ...hatch("F", 690, 960, 24, 32, -60, 90, 6),
  ...hatch("F", 180, 560, 10, 40, -60, 20, 8),
  ...hatch("E", 1400, 1280, -16, 30, 130, 95, 7),
  ...hatch("E", 1460, 1270, 40, 30, -110, 180, 4),
  ...hatch("C", 20, 1420, -26, 34, 110, 70, 5),
  ...hatch("C", 1050, 1400, -34, 44, 60, 40, 4),
  ...hatch("A", 800, 1230, 36, 12, -6, 45, 6),
  ...hatch("A", 990, 1330, 24, 55, 50, -20, 5),
  ...hatch("A", 370, 1170, -20, 60, 8, 20, 4),
  ...hatch("B", 975, 1140, 4, 30, 45, 4, 6),
  ...hatch("B", 1170, 1230, 34, 10, 30, 36, 4),
  ...hatch("D", 740, 330, -4, 55, 30, 10, 4),
  ...hatch("F", 470, 90, 36, 32, -60, 80, 4),
  ...hatch("F", 980, 500, 46, -52, 44, 36, 4),
];

const GARDEN_PATHS = [
  "A 265 36 262 150 350 210 320 300 400 360 550 470", "A 675 36 670 80 540 250 455 370", "A 345 210 390 260 380 290 440 350", "A 315 320 370 350 410 420 475 390",
  "A 640 120 560 145 530 220 440 340", "A 1290 36 1360 90 1345 36", "A 1480 36 1485 110 1568 80", "A 1530 100 1560 40 1568 60",
  "B 20 60 100 100 180 50 250 100 320 50", "B 60 140 130 60 200 120 300 40", "B 100 36 140 90 240 60 200 36",
  "D 260 170 330 240 290 330 400 350 500 330 430 260 520 200 590 170", "D 300 140 350 160 450 150 530 220 460 300 380 290", "D 250 220 310 190 250 300 330 350",
  "D 450 240 520 270 590 200", "D 270 280 340 320 410 310 450 350", "D 310 360 310 480 340 600", "D 350 500 350 580 430 590 500 490 530 560 450 600 390 550",
  "D 440 540 520 500 500 600 420 640 340 720", "D 300 720 340 680 400 740 470 700 530 600", "D 310 640 290 760 400 760", "D 110 900 180 840 240 900 160 990 110 950 230 860",
  "D 170 950 200 1010 250 850", "D 260 900 240 1000 300 1010 300 860", "D 330 900 320 1020", "D 400 830 400 1030", "D 160 1000 260 1040 280 1080 290 1130 370 1130 410 1150 370 1180 340 1160 370 1130",
  "D 300 1090 380 1030 440 1110 380 1200 310 1180", "D 290 1130 360 1220 470 1250 530 1360 480 1420 400 1370 380 1260", "D 120 1160 200 1200 260 1300 330 1440", "D 110 1060 130 1110 220 1160",
  "D 430 1240 460 1130 450 1320 500 1400", "D 210 1250 230 1330 280 1380 230 1330", "D 420 1250 420 1350 490 1340", "D 500 1420 540 1350", "D 350 1180 380 1230 440 1170", "D 230 1090 300 1060",
  "D 500 1270 380 1200 370 1380", "D 31 1335 80 1310 130 1230", "D 40 930 60 1000 80 1050", "D 1110 140 1120 80 1170 90",
  "B 1140 960 1180 1000 1140 1040 1200 1020 1210 960 1160 1010", "B 1220 960 1300 970 1220 1020 1360 1020 1290 1050 1200 1030", "B 940 290 1000 190 1030 150", "B 960 310 1100 300 1140 290", "B 1165 1250 1190 1280 1180 1330",
  "C 500 50 600 160 700 240 800 300", "C 860 350 930 400 975 470 1000 590 1015 730 1005 830 980 920 950 1010", "C 990 1200 1060 1330 1110 1430 1160 1470 1200 1560", "C 155 210 180 240 150 300 220 340", "C 110 600 160 580 180 620 130 630",
  "C 1190 770 1320 950", "C 0 1230 120 1330 260 1400 400 1500", "C 360 1400 450 1450 440 1510 370 1420 380 1470", "C 100 1130 90 1190 40 1230", "C 400 830 390 780 450 780", "C 860 360 900 390 870 400", "C 945 655 1005 655", "C 1125 1265 1070 1365",
  "F 540 60 650 150 800 220 900 250", "F 680 180 640 240 780 200", "F 1205 90 1200 240 1170 330 1190 350", "F 1180 70 1160 180 1190 260 1280 260 1310 320", "F 790 460 830 440 820 500 790 460 830 530",
  "F 1245 0 1245 200 1250 400 1280 420 1260 460 1340 600 1390 680 1430 670", "F 1400 720 1390 810 1410 850 1380 870 1370 920 1410 1000 1450 970", "F 1390 1220 1360 1350 1290 1420", "F 1460 1220 1490 1300 1470 1420 1400 1527",
  "F 1150 1500 1260 1480 1300 1440", "F 1140 1520 1200 1470 1280 1500", "F 790 70 830 100", "E 905 640 930 670 980 630", "E 940 520 960 520 965 565 940 560 945 520", "E 730 810 755 900", "E 675 255 700 260 705 300 730 300", "E 1150 870 1180 880", "E 1350 910 1370 930",
];

const INK = "#4d5873";
/* weight, size, colour, start-to-end baseline, text */
const LABELS = [
  [400, 20, "#5a5352", "B 807 582 1362 582", "Real Madrid Foundation"],
  [400, 20, "#5a5352", "B 807 643 1377 643", "Football & Basketball S..."],
  [400, 20, "#5a5352", "B 507 1390 908 1390", "Casa Mia Whitley"],
  [400, 20, "#5a5352", "E 1036 92 1378 92", "Dr Nor Azhari -"],
  [400, 20, "#5a5352", "E 1036 146 1603 146", "Urologist Singapore | K..."],
  [400, 20, "#3f82ec", "C 1018 278 1478 278", "The Woodleigh Mall"],
  [400, 20, "#3f82ec", "F -91 1150 271 1150", "Mustafa Centre"],
  [400, 20, "#6d8996", "C -106 965 314 965", "Lian Shan Shuang"],
  [400, 20, "#6d8996", "C -15 1025 316 1025", "Lin Monastery"],
  [400, 20, "#6d8996", "F 30 846 316 846", "Sri Srinivasa"],
  [400, 20, "#6d8996", "F -65 896 316 896", "Perumal Temple"],
  [400, 20, "#2f9574", "D 97 642 290 642", "National"],
  [400, 20, "#2f9574", "D 20 700 291 700", "Parks Board"],
  [400, 20, "#2f9574", "D 223 825 458 825", "Singapore"],
  [400, 20, "#2f9574", "D 250 893 427 893", "Botanic"],
  [400, 20, "#2f9574", "D 244 952 436 952", "Gardens"],
  [400, 20, "#ec3bbd", "D 1190 1034 1691 1034", "Shangri-La Singapore"],
  [400, 16, "#ec3bbd", "D 1191 1086 1363 1086", "Top rated"],
  [400, 20, "#ec3bbd", "E 1058 240 1518 240", "Holiday Inn Express"],
  [400, 20, "#ec3bbd", "E 1044 298 1518 298", "& Suites Singapore..."],
  [400, 16, "#ec3bbd", "E 1347 349 1518 349", "Top rated"],
  [400, 20, "#ec3bbd", "F 775 1518 1028 1518", "Hotel Boss"],
  [500, 18, "#3c3e42", "C 858 560 1222 560", "POTONG PASIR"],
  [500, 18, "#3c3e42", "C 264 708 541 708", "TOA PAYOH"],
  [500, 18, "#3c3e42", "C 340 1541 598 1541", "WHAMPOA"],
  [500, 18, "#3c3e42", "D 450 1458 663 1458", "TANGLIN"],
  [500, 18, "#3c3e42", "E 738 290 940 290", "NOVENA"],
  [500, 18, "#3c3e42", "E 582 1407 792 1407", "NEWTON"],
  [500, 18, "#3c3e42", "F 940 1196 1168 1196", "KALLANG"],
  [500, 18, "#3c3e42", "F 1507 732 1570 732", "BO"],
  [400, 18, INK, "A 993 133 1168 133", "Lornie Rd"],
  [400, 18, INK, "A 552 686 752 572", "Lornie Hwy"],
  [400, 18, INK, "A 256 1120 354 952", "Adam Rd"],
  [400, 18, INK, "A 755 1092 818 1122", "PIE"],
  [400, 17, INK, "D 126 222 A 190 1462", "Farrer Flyover"],
  [400, 18, INK, "B 100 195 190 180 260 148 400 66", "Lornie Viaduct"],
  [400, 18, INK, "B 657 1205 718 1165", "PIE"],
  [400, 18, INK, "C 233 1145 300 1150", "PIE"],
  [400, 17.5, INK, "C 138 328 200 398 250 455 310 512 380 580", "Lor 6 Toa Payoh"],
  [400, 18, INK, "C 1363 965 1395 830 1430 700 1455 600 1475 440", "Upper Serangoon Rd"],
  [400, 17.5, INK, "C 1080 1553 1150 1450 1200 1370 1265 1268", "Serangoon Rd"],
  [400, 17, INK, "C 1515 1475 1555 1535", "PIE"],
  [400, 17.5, INK, "D -10 1410 90 1478 200 1510", "Holland Rd"],
  [400, 18, INK, "D 435 93 560 110 690 150", "Dunearn Rd"],
  [400, 18, INK, "D 660 432 690 330 735 215", "Evans Rd"],
  [400, 18, INK, "D 1032 400 1045 480 1075 660", "Stevens Rd"],
  [400, 18, INK, "E 0 475 80 500 180 545 320 590", "Bukit Timah Rd"],
  [400, 18, INK, "E 388 650 450 735 575 875", "Dunearn Rd"],
  [400, 18, INK, "E 675 860 740 770 782 620", "Newton Rd"],
  [400, 18, INK, "E 265 1185 340 1148 450 1060", "Scotts Rd"],
  [400, 18, INK, "E 1120 1255 1210 1375 1370 1550", "Bukit Timah Rd"],
  [400, 18, INK, "F 318 503 400 562 545 658", "Balestier Rd"],
  [400, 18, INK, "F 612 735 680 850 775 990", "Lavender St."],
  [400, 18, INK, "F 1005 430 1060 330 1110 240 1185 105", "Bendemeer Rd"],
  [400, 18, INK, "F 453 1392 490 1310 565 1170", "Jln Besar"],
  [400, 18, INK, "F 930 1370 1010 1312 1160 1256", "Kallang Rd"],
  [400, 18, INK, "F 1440 1185 1600 1185", "Geylang"],
];

const EXIT = "#68a03f";
const SHIELDS = [
  [EXIT, "A 118 683 187 730", "20B"], [EXIT, "A 559 940 630 987", "20A"], [EXIT, "A 1354 1303 1401 1350", "19"],
  [EXIT, "B 936 934 1103 981", "PIE (Tuas)"], ["#d93029", "B 1147 118 1236 171", "NS18"], ["#d93029", "B 1163 829 1249 882", "NS19"],
  ["#fdae2b", "B 544 374 630 427", "CC17"], ["#9b5a26", "B 634 374 698 427", "TE9"],
  [EXIT, "C 622 1034 671 1081", "15"], [EXIT, "C 868 1034 919 1081", "8A"], [EXIT, "C 1430 1311 1502 1358", "15A"], [EXIT, "C 1445 1386 1495 1433", "13"],
  ["#fdae2b", "D 188 118 275 171", "CC19"], ["#0a56ad", "D 276 118 343 171", "DT9"], ["#0a56ad", "D 1012 320 1099 372", "DT10"], ["#9b5a26", "D 1100 320 1183 372", "TE11"],
  ["#9b5a26", "D 573 1492 658 1544", "TE12"], ["#0a56ad", "E 422 957 509 1009", "DT11"], ["#d93029", "E 510 957 596 1009", "NS21"],
  [EXIT, "E 1382 495 1434 543", "7A"], [EXIT, "E 1038 808 1069 855", "6"], [EXIT, "E 837 1291 868 1338", "5"],
  [EXIT, "F 442 158 493 205", "7D"], [EXIT, "F 226 349 278 397", "7C"], ["#84418f", "F 761 312 830 363", "NE9"], ["#0a56ad", "F 875 855 962 906", "DT23"],
  ["#0a56ad", "F 1495 192 1582 243", "DT26"], ["#169a4f", "F 1473 1030 1570 1082", "EW10"], ["#0a56ad", "F 285 1518 372 1570", ""],
];

const Bed = () => (
  <g fill="none" stroke="#fff" strokeWidth="1.8">
    <path d="M-8.5-6V6M-8.5 3H8.5M8.5 6V-1" />
    <path d="M-1-4H6.5a2 2 0 0 1 2 2V3H-1Z" fill="#fff" stroke="none" />
    <circle cx="-4.5" cy="-1.5" r="2" fill="#fff" stroke="none" />
  </g>
);

const Bag = () => (
  <g>
    <path d="M-6-3H6L7.5 8H-7.5Z" fill="#fff" />
    <path d="M-3-3V-5a3 3 0 0 1 6 0V-3" fill="none" stroke="#fff" strokeWidth="1.8" />
    <path d="M-2.5 1.5a2.5 2.5 0 0 0 5 0" fill="none" stroke="#0d93f8" strokeWidth="1.5" />
  </g>
);

const Flower = () => (
  <g fill="#fff">
    {[0, 72, 144, 216, 288].map((a) => (
      <ellipse key={a} cx="0" cy="-5.5" rx="2.7" ry="3.9" transform={`rotate(${a})`} />
    ))}
  </g>
);

const Om = () => (
  <text textAnchor="middle" y="7" fontSize="20" fontWeight="700" fill="#fff" fontFamily="'DejaVu Sans', 'Noto Sans', sans-serif">ॐ</text>
);

const Gate = () => (
  <g>
    <clipPath id="gate"><circle r="23" /></clipPath>
    <g clipPath="url(#gate)">
      <rect x="-24" y="-24" width="48" height="48" fill="#8fb4d8" />
      <path d="M-24-18Q-12-22 0-16T24-20V-8H-24Z" fill="#dfe8ee" />
      <path d="M-24 6H24V24H-24Z" fill="#4c5f3e" />
      <path d="M-10 0H10V8H-10Z" fill="#dde4ea" />
      <path d="M-5 6H5L12 24H-12Z" fill="#aaa79b" />
      <path d="M-19-9Q-17-14-13-15H13Q17-14 19-9Z" fill="#382a2a" />
      <path d="M-24-1-20-5H-12V1H-24ZM12-5H20L24-1V1H12Z" fill="#70423a" />
      <path d="M-12-9V20M12-9V20M-20 0V15M20 0V15" stroke="#49352e" strokeWidth="3" />
      <path d="M-13-6H13" stroke="#475987" strokeWidth="5" />
      <path d="M-24 11H-12V22H-24ZM12 11H24V22H12Z" fill="#26412d" />
      <path d="M-6 5 0 1 6 5V7H-6Z" fill="#b56354" />
    </g>
  </g>
);

const MARKERS = [
  ["square", "#18a873", "B 728 587", <circle key="d" r="4.5" fill="#fff" />],
  ["square", "#fb46cb", "B 430 1372", <Bed key="b" />],
  ["square", "#fa4b5a", "E 959 96", <path key="h" d="M-5-6V7M5-6V7M-5 .5H5" stroke="#fff" strokeWidth="3" />],
  ["round", "#fb46cb", "F 123 265", <Bed key="b" />],
  ["round", "#fb46cb", "D 1122 1034", <Bed key="b" />],
  ["round", "#fb46cb", "F 704 1484", <Bed key="b" />],
  ["round", "#18a873", "D 358 636", <Flower key="f" />],
  ["round", "#78909c", "F 387 842", <Om key="o" />],
  ["round", "#0d93f8", "F 338 1116", <Bag key="g" />],
  ["round", "#0d93f8", "C 1550 253", <Bag key="g" />],
  ["photo", "#fff", "C 414 963", <Gate key="p" />],
];

function Marker({ kind, color, at, children }) {
  const [x, y] = points(at)[0];
  const r = kind === "photo" ? 24.5 : 17.5;
  return (
    <g transform={`translate(${f(x)} ${f(y)})`}>
      <g filter="url(#lift)">
        {kind === "square" ? (
          <rect x="-17" y="-17" width="34" height="34" rx="4" fill="#fff" />
        ) : (
          <path d={`M${-r * 0.8} ${r * 0.6}L0 ${r * 1.28}L${r * 0.8} ${r * 0.6}A${r} ${r} 0 1 0 ${-r * 0.8} ${r * 0.6}Z`} fill="#fff" />
        )}
      </g>
      {kind === "square" && <rect x="-14.5" y="-14.5" width="29" height="29" rx="2.5" fill={color} />}
      {kind === "round" && <circle r="14.7" fill={color} />}
      {children}
    </g>
  );
}

function MapLabel({ id, weight, size, color, along, text }) {
  const p = points(along);
  const common = {
    fontSize: size, fontWeight: weight, fill: color, stroke: "#fff",
    strokeOpacity: 0.8, strokeWidth: 2.6, paintOrder: "stroke", strokeLinejoin: "round",
  };
  if (p.length > 2) {
    return (
      <text {...common}>
        <textPath href={`#${id}`}>{text}</textPath>
      </text>
    );
  }
  const dx = p[1][0] - p[0][0];
  const dy = p[1][1] - p[0][1];
  return (
    <text
      {...common}
      textLength={f(Math.hypot(dx, dy))}
      transform={`translate(${f(p[0][0])} ${f(p[0][1])}) rotate(${f((Math.atan2(dy, dx) * 180) / Math.PI)})`}
    >
      {text}
    </text>
  );
}

function Shield({ color, box, text }) {
  const [[x1, y1], [x2, y2]] = points(box);
  const exit = color === EXIT;
  return (
    <g>
      <rect x={x1} y={y1} width={x2 - x1} height={y2 - y1} fill={color} />
      {text && (
        <text
          x={x1 + 2.2}
          y={y2 - (exit ? 2.6 : 3)}
          textLength={text.length > 1 ? f(x2 - x1 - 4.4) : undefined}
          lengthAdjust="spacingAndGlyphs"
          fontSize={exit ? 15 : 16}
          fontWeight={exit ? 700 : 400}
          fill="#fff"
        >
          {text}
        </text>
      )}
    </g>
  );
}

function CityMap() {
  return (
    <svg width="1700" height="1024" viewBox="12 832 1700 1024" role="img" aria-label="Map">
      <defs>
        <filter id="lift" x="-30%" y="-30%" width="160%" height="170%">
          <feDropShadow dx="0" dy="1.5" stdDeviation="1.5" floodOpacity="0.4" />
        </filter>
        {LABELS.map((l, i) => points(l[3]).length > 2 && <path key={i} id={`way-${i}`} d={curve(l[3])} />)}
      </defs>
      <rect x="12" y="832" width="1700" height="1024" fill={C.land} />
      {AREAS.map(([fill, d], i) => <path key={i} d={poly(d)} fill={fill} />)}
      <g fill="none" stroke={C.path} strokeWidth="1.1">
        {GARDEN_PATHS.map((d, i) => <path key={i} d={curve(d)} />)}
      </g>
      <g fill="none" stroke={C.street} strokeWidth="2.6" strokeLinejoin="round" opacity="0.9">
        {STREETS.map((d, i) => <path key={i} d={curve(d)} />)}
        {BLOCKS.map((d, i) => <path key={i} d={line(d)} />)}
      </g>
      <g fill="none" stroke={C.water}>
        {WATERWAYS.map(([w, d], i) => <path key={i} d={curve(d)} strokeWidth={w} />)}
      </g>
      <g fill="none" stroke={C.street} strokeLinecap="round">
        {ARTERIALS.map(([w, d], i) => <path key={i} d={curve(d)} strokeWidth={w} />)}
      </g>
      <g fill="none" stroke={C.parkRoad} strokeLinecap="round">
        <path d={curve("A 440 720 500 640 545 500 600 370 650 270 720 205 850 155 980 100 1100 95 1220 110 1300 150")} strokeWidth="13" />
        <path d={curve("A 550 540 570 585 620 620")} strokeWidth="8" />
        <path d={curve("A 1300 190 1350 205 1430 170")} strokeWidth="8" />
        <path d={curve("A 31 250 100 315 170 355 260 350 310 395 370 440 420 520 510 555")} strokeWidth="4" />
        <path d={curve("A 680 820 655 900 630 980 620 1040")} strokeWidth="5" />
        <path d={curve("D 240 115 220 250 270 380 300 480 300 620 250 720 190 820 110 890 70 980 90 1110 150 1220 210 1330 260 1450")} strokeWidth="5" />
        <path d={curve("D 620 165 610 230 520 290")} strokeWidth="5" />
        <path d={curve("D 85 1040 120 1040 180 1110 270 1110 290 1140 260 1160 270 1110")} strokeWidth="3" />
      </g>
      <g fill="none" strokeLinecap="round">
        {HIGHWAYS.map(([w, d], i) => <path key={i} d={curve(d)} stroke={C.hwyEdge} strokeWidth={w + 1} />)}
        {HIGHWAYS.map(([w, d], i) => <path key={i} d={curve(d)} stroke={C.hwy} strokeWidth={w - 1} />)}
        <path d={curve(PIE)} stroke={C.hwyEdge} strokeWidth="1" />
        <path d={curve("D 280 84 420 93 540 108 650 135 760 170 880 210 1000 252")} stroke={C.water} strokeWidth="3" />
        <path d={curve("D 700 150 850 195 1000 250 1100 285 1250 338 1400 400 1500 440")} stroke="#f3f6f8" strokeWidth="4" />
        <path d={curve("D 1060 280 1200 330 1320 380 1440 430 E 30 452 150 500 270 540")} stroke={C.water} strokeWidth="4" />
        <path d={curve("D 800 175 950 225 1100 275 1200 315")} stroke="#4c638f" strokeWidth="1.5" />
        <path d={curve("E 345 600 400 670 460 750 530 830")} stroke={C.water} strokeWidth="2" />
        <path d={curve(CTE_SOUTH)} stroke={C.hwyEdge} strokeWidth="17" />
        <path d={curve(CTE_SOUTH)} stroke={C.hwy} strokeWidth="15" />
        <path d={curve(CTE_SOUTH)} stroke={C.hwyEdge} strokeWidth="1" />
        <path d={curve("E 988 1095 970 1150 910 1235 840 1300 760 1370 700 1440 676 1500")} stroke="#a5b7d0" strokeWidth="10" />
        <path d={curve("C 790 36 822 160 836 260 842 400")} stroke={C.hwy} strokeWidth="19" />
        <path d={curve(CTE_NORTH)} stroke={C.cteEdge} strokeWidth="16" />
        <path d={curve(CTE_NORTH)} stroke={C.cte} strokeWidth="13.5" />
        <path d={curve(CTE_NORTH)} stroke={C.cteEdge} strokeWidth="1" />
        <path d={curve("C 835 1012 868 1014")} stroke={C.hwy} strokeWidth="11" />
        <path d={curve("C 1312 1145 1290 1290")} stroke="#a5b7d0" strokeWidth="8" />
        <path d={curve("C 1350 1220 1405 1212")} stroke="#a5b7d0" strokeWidth="5" />
      </g>
      <path d={curve("B 625 1050 670 1110 700 1160 735 1240")} fill="none" stroke={C.street} strokeWidth="12" />
      {LABELS.map(([weight, size, color, along, text], i) => (
        <MapLabel key={i} id={`way-${i}`} weight={weight} size={size} color={color} along={along} text={text} />
      ))}
      {SHIELDS.map(([color, box, text]) => <Shield key={box} color={color} box={box} text={text} />)}
      {MARKERS.map(([kind, color, at, glyph]) => (
        <Marker key={at} kind={kind} color={color} at={at}>{glyph}</Marker>
      ))}
    </svg>
  );
}

function Target() {
  return (
    <TargetIcon viewBox="0 0 88 88" fill="none" stroke="#1d74be" strokeWidth="7.3" strokeLinecap="round">
      <circle cx="44" cy="44" r="33" />
      <circle cx="44" cy="44" r="14.8" />
      <path d="M44 3.7V9M44 79V84.3M3.7 44H9M79 44H84.3" />
    </TargetIcon>
  );
}

const FIELDS = [
  { name: "Name", track: 0.2 },
  { name: "Phone Number", track: -0.6 },
  { name: "Address", track: 1.2 },
  { name: "Note", track: -1.6, tall: true },
];

export default function App() {
  return (
    <>
      <GlobalStyle />
      <Phone>
        <Notch />
        <StatusBar>
          <Clock>9:41</Clock>
          <StatusIcons viewBox="1302 70 314 56">
            <rect x="1303" y="104" width="12.8" height="19" rx="4" />
            <rect x="1324.2" y="94" width="12.8" height="29" rx="4" />
            <rect x="1345.5" y="84" width="12.8" height="39" rx="4" />
            <rect x="1366.8" y="74" width="12.8" height="49" rx="4" />
            <path d="M1409.800 88Q1443.600 60.500 1477.500 88V89L1471.500 94.500Q1443.600 73.500 1415.800 94.500L1409.800 89Z" />
            <path d="M1421.500 99.500Q1443.600 81.500 1465.800 99.500V100.500L1459.800 106.500Q1443.600 95 1427.500 106.500L1421.500 100.500Z" />
            <path d="M1433.300 111.500Q1443.600 102 1453.800 111.500V112.500L1443.600 123 1433.300 112.500Z" />
            <rect x="1509" y="74" width="96" height="48" rx="13" fill="none" stroke="#a6a6a6" strokeWidth="4" />
            <rect x="1514.5" y="80" width="84.5" height="36" rx="7" />
            <path d="M1611 91Q1616 94 1616 99T1611 107Z" fill="#a6a6a6" />
          </StatusIcons>
        </StatusBar>

        <Search>
          <Field $icon>
            <PinIcon viewBox="0 0 61 73" fill="none" stroke="#1d74be" strokeWidth="6.6">
              <path d="M30.5 68.500C20 57.500 3.500 43.500 3.500 29.500a27 26.200 0 0 1 54 0C57.500 43.500 41 57.500 30.500 68.500Z" />
              <circle cx="30.5" cy="30.5" r="9" />
            </PinIcon>
            <Label $muted $lift={-10} $track={-0.4}>Location</Label>
          </Field>
        </Search>

        <Choices>
          <Choice $width={768}>
            <Target />
            <Label $lift={-8} $track={-0.7}>Current Location</Label>
          </Choice>
          <Choice $width={760}>
            <Target />
            <Label $lift={-8} $track={-0.7}>Locate on the Map</Label>
          </Choice>
        </Choices>

        <MapFrame>
          <CityMap />
        </MapFrame>

        <Form>
          {FIELDS.map((field) => (
            <Field key={field.name} $tall={field.tall}>
              <Label $track={field.track}>{field.name}</Label>
            </Field>
          ))}
        </Form>
        <Submit type="button">Submit</Submit>
      </Phone>
    </>
  );
}
